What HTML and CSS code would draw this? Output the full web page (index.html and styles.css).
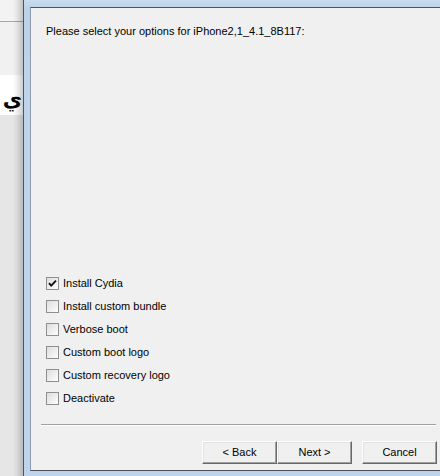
FILE: index.html
```html
<!DOCTYPE html>
<html>
<head>
<meta charset="utf-8">
<link rel="stylesheet" href="styles.css">
</head>
<body>
<div class="screen">
  <div class="bg-strip">
    <div class="bg-top"></div>
    <div class="bg-pane"></div>
    <div class="bg-white"><span class="arabic">ي</span></div>
    <div class="bg-rest"></div>
  </div>
  <div class="window">
    <div class="client">
      <p class="heading">Please select your options for iPhone2,1_4.1_8B117:</p>
      <div class="options">
        <label class="opt">
          <svg class="cb" width="13" height="13" viewBox="0 0 13 13">
            <defs><linearGradient id="g1" x1="0" y1="0" x2="1" y2="1"><stop offset="0" stop-color="#dcdcdc"/><stop offset="1" stop-color="#ffffff"/></linearGradient></defs>
            <rect x="0.5" y="0.5" width="12" height="12" fill="url(#g1)" stroke="#8e8f8f"/>
            <path d="M3 6.2 L5.2 8.6 L10 3.6" fill="none" stroke="#111" stroke-width="1.9"/>
          </svg>
          <span>Install Cydia</span>
        </label>
        <label class="opt">
          <svg class="cb" width="13" height="13" viewBox="0 0 13 13">
            <defs><linearGradient id="g2" x1="0" y1="0" x2="1" y2="1"><stop offset="0" stop-color="#dcdcdc"/><stop offset="1" stop-color="#ffffff"/></linearGradient></defs>
            <rect x="0.5" y="0.5" width="12" height="12" fill="url(#g2)" stroke="#8e8f8f"/>
          </svg>
          <span>Install custom bundle</span>
        </label>
        <label class="opt">
          <svg class="cb" width="13" height="13" viewBox="0 0 13 13">
            <defs><linearGradient id="g3" x1="0" y1="0" x2="1" y2="1"><stop offset="0" stop-color="#dcdcdc"/><stop offset="1" stop-color="#ffffff"/></linearGradient></defs>
            <rect x="0.5" y="0.5" width="12" height="12" fill="url(#g3)" stroke="#8e8f8f"/>
          </svg>
          <span>Verbose boot</span>
        </label>
        <label class="opt">
          <svg class="cb" width="13" height="13" viewBox="0 0 13 13">
            <defs><linearGradient id="g4" x1="0" y1="0" x2="1" y2="1"><stop offset="0" stop-color="#dcdcdc"/><stop offset="1" stop-color="#ffffff"/></linearGradient></defs>
            <rect x="0.5" y="0.5" width="12" height="12" fill="url(#g4)" stroke="#8e8f8f"/>
          </svg>
          <span>Custom boot logo</span>
        </label>
        <label class="opt">
          <svg class="cb" width="13" height="13" viewBox="0 0 13 13">
            <defs><linearGradient id="g5" x1="0" y1="0" x2="1" y2="1"><stop offset="0" stop-color="#dcdcdc"/><stop offset="1" stop-color="#ffffff"/></linearGradient></defs>
            <rect x="0.5" y="0.5" width="12" height="12" fill="url(#g5)" stroke="#8e8f8f"/>
          </svg>
          <span>Custom recovery logo</span>
        </label>
        <label class="opt">
          <svg class="cb" width="13" height="13" viewBox="0 0 13 13">
            <defs><linearGradient id="g6" x1="0" y1="0" x2="1" y2="1"><stop offset="0" stop-color="#dcdcdc"/><stop offset="1" stop-color="#ffffff"/></linearGradient></defs>
            <rect x="0.5" y="0.5" width="12" height="12" fill="url(#g6)" stroke="#8e8f8f"/>
          </svg>
          <span>Deactivate</span>
        </label>
      </div>
      <div class="separator"></div>
      <div class="buttons">
        <button class="btn">&lt; Back</button>
        <button class="btn">Next &gt;</button>
        <button class="btn btn-cancel">Cancel</button>
      </div>
    </div>
  </div>
</div>
</body>
</html>
```
FILE: styles.css
```css
html, body {
  margin: 0;
  padding: 0;
  width: 440px;
  height: 476px;
  overflow: hidden;
  font-family: "Liberation Sans", Arial, sans-serif;
  font-size: 11px;
  color: #000;
}

.screen {
  display: flex;
  width: 440px;
  height: 476px;
}

/* background window on the left */
.bg-strip {
  position: relative;
  width: 23px;
  flex: none;
  display: flex;
  flex-direction: column;
  overflow: hidden;
}
.bg-strip::after {
  content: "";
  position: absolute;
  inset: 0;
  background: linear-gradient(to right, rgba(0,0,0,0) 0, rgba(0,0,0,0) 13px, rgba(0,0,0,0.06) 17px, rgba(0,0,0,0.2) 23px);
  pointer-events: none;
}
.bg-top {
  height: 21px;
  background: #f3f3f3;
  border-bottom: 1px solid #a7a7a7;
}
.bg-pane {
  height: 53px;
  background: #f1f1f1;
}
.bg-white {
  height: 40px;
  background: #ffffff;
  display: flex;
  justify-content: flex-end;
}
.arabic {
  font-family: "DejaVu Sans", sans-serif;
  font-weight: bold;
  font-size: 21px;
  line-height: 21px;
  margin-top: 14px;
  margin-right: 1px;
  color: #000;
}
.bg-rest {
  flex: 1;
  background: #e6e6e6;
}

/* foreground window */
.window {
  flex: 1;
  display: flex;
  border-left: 1px solid #4e555e;
  background: linear-gradient(to bottom, #c9dcf0, #bcd3eb 8px, #bed4ec);
  padding: 7px 0 5px 6px;
}
.client {
  flex: 1;
  display: flex;
  flex-direction: column;
  background: #f0f0f0;
  border-top: 1px solid #4a5562;
  border-left: 1px solid #8f9cab;
  border-bottom: 1px solid #4a4f56;
}

.heading {
  margin: 0;
  padding: 17px 0 0 15px;
  line-height: 13px;
}

.options {
  margin-top: auto;
  padding-left: 15px;
  display: flex;
  flex-direction: column;
}
.opt {
  height: 23px;
  display: flex;
  align-items: center;
  gap: 4px;
  line-height: 13px;
}
.cb {
  display: block;
  flex: none;
}

.separator {
  margin: 14px 4px 0 10px;
  height: 1px;
  background: #a0a0a0;
  border-bottom: 1px solid #ffffff;
}

.buttons {
  display: flex;
  justify-content: flex-end;
  margin-top: 15px;
  padding: 0 3px 6px 0;
}
.btn {
  box-sizing: border-box;
  width: 75px;
  height: 23px;
  margin: 0;
  padding: 0 0 1px 0;
  font-family: "Liberation Sans", Arial, sans-serif;
  font-size: 11px;
  color: #000;
  background: #f0f0f0;
  border: 1px solid;
  border-color: #ffffff #696969 #696969 #ffffff;
  box-shadow: inset -1px -1px 0 #a0a0a0, inset 1px 1px 0 #e3e3e3;
  border-radius: 0;
}
.btn-cancel {
  margin-left: 10px;
}
```
